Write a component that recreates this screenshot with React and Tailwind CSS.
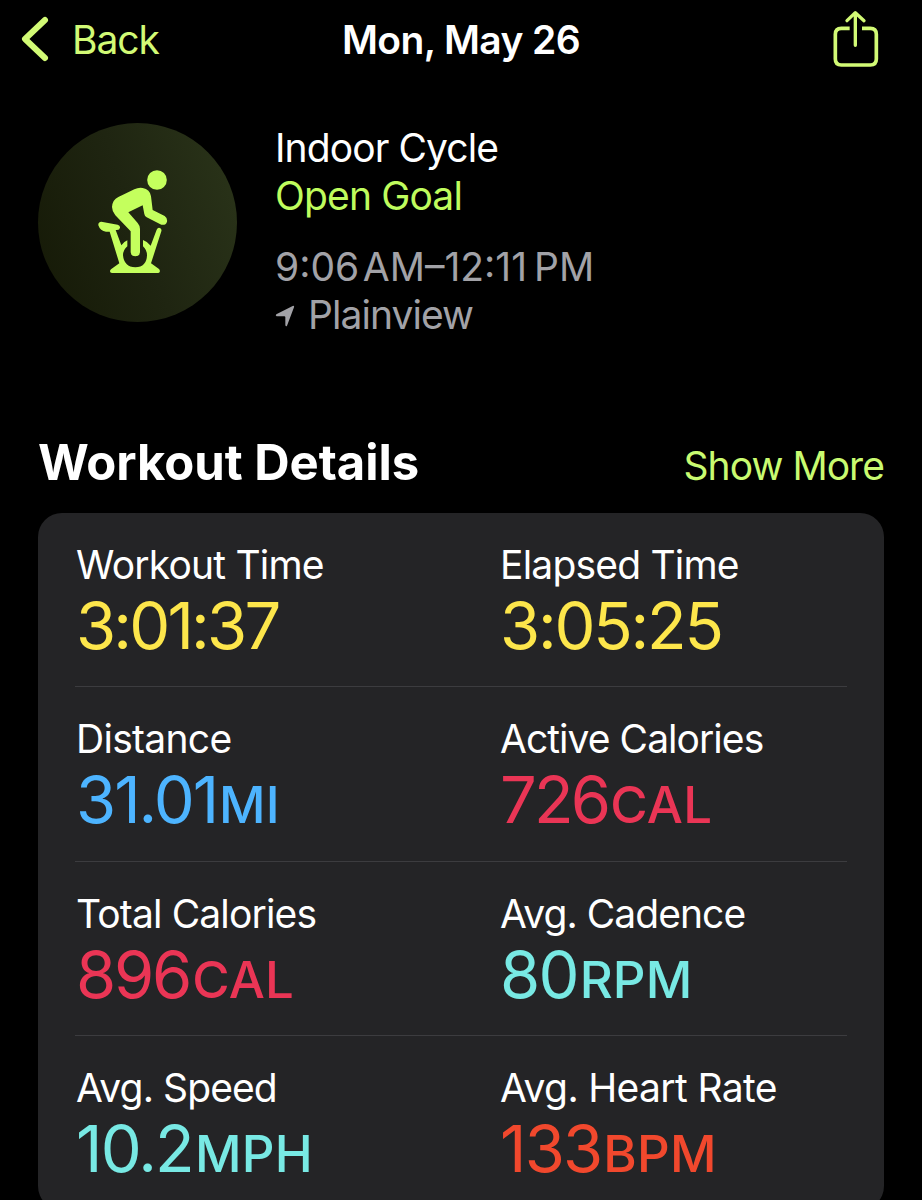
import React from 'react';

const metrics = [
    { label: 'Workout Time', value: '3:01:37', color: 'text-[#fde64b]', labelTracking: 'tracking-[-0.8px]', valueTracking: 'tracking-[-2.8px]' },
    { label: 'Elapsed Time', value: '3:05:25', color: 'text-[#fde64b]', labelTracking: 'tracking-[-0.8px]', valueTracking: 'tracking-[-2.2px]' },
    { label: 'Distance', value: '31.01', unit: 'MI', color: 'text-[#4db4ff]', labelTracking: 'tracking-[-0.7px]', valueTracking: 'tracking-[-2px]' },
    { label: 'Active Calories', value: '726', unit: 'CAL', color: 'text-[#ea3555]', labelTracking: 'tracking-[-0.95px]', valueTracking: 'tracking-[-2.8px]' },
    { label: 'Total Calories', value: '896', unit: 'CAL', color: 'text-[#ea3555]', labelTracking: 'tracking-[-0.85px]', valueTracking: 'tracking-[-2.2px]' },
    { label: 'Avg. Cadence', value: '80', unit: 'RPM', color: 'text-[#78e9e4]', labelTracking: 'tracking-[-0.95px]', valueTracking: 'tracking-[-1.8px]' },
    { label: 'Avg. Speed', value: '10.2', unit: 'MPH', color: 'text-[#78e9e4]', labelTracking: 'tracking-[-0.9px]', valueTracking: 'tracking-[-1.8px]' },
    { label: 'Avg. Heart Rate', value: '133', unit: 'BPM', color: 'text-[#f1482d]', labelTracking: 'tracking-[-0.65px]', valueTracking: 'tracking-[-1.8px]' },
];

const ChevronIcon = () => (
    <svg viewBox="60 45 90 144" className="w-[30px] h-12" fill="none" stroke="currentColor" strokeWidth="18" strokeLinecap="round" strokeLinejoin="round">
        <path d="M135 60 L75 117 L135 174" />
    </svg>
);

const ShareIcon = () => (
    <svg viewBox="156 24 144 180" className="w-12 h-[60px]" fill="none" stroke="currentColor" strokeWidth="11" strokeLinecap="round" strokeLinejoin="round">
        <path d="M226 133 V36 M201 59 L226 35 L252 59" strokeWidth="10" />
        <path strokeLinecap="butt" d="M209 82 H184 Q166 82 166 100 V174 Q166 192 184 192 H271 Q289 192 289 174 V100 Q289 82 271 82 H246" />
    </svg>
);

const IndoorCycleIcon = () => (
    <svg viewBox="24 24 597 597" className="w-full h-full text-[#c4ff5d]" fill="currentColor">
        {/* rider */}
        <circle cx="381" cy="195" r="29.5" />
        <path d="M251 258 Q256 251 265 246 L313 223 Q325 217 338 219 Q360 223 363 244 L368 285 L404 303 Q413 309 411 320 Q407 332 394 329 L350 307 Q344 304 343 297 L338 271 L295 292 L323 324 Q330 332 330 342 V412 Q329 424 316 424 Q303 424 302 412 V349 L256 301 Q239 280 251 258 Z" />
        {/* bike: saddle, posts, flywheel guard and base */}
        <path d="M214 320 L263 329 Q271 331 270 338 Q269 345 261 345 H257 L274 391 Q280 381 292 376 V394 Q279 405 279 421 Q282 456 316 457 Q350 456 351 421 Q351 405 339 394 V375 Q353 380 362 392 L380 344 Q384 336 390 339 Q396 342 394 349 L363 445 L387 462 Q391 466 389 471 Q388 474 384 474 H246 Q240 474 240 469 Q240 465 244 462 L268 445 L239 350 H228 Q211 349 205 331 Q204 321 214 320 Z" />
    </svg>
);

const LocationIcon = () => (
    <svg viewBox="33 555 60 66" className="mt-[4px] w-5 h-[22px]" fill="currentColor">
        <path d="M86 558 Q92 556 90 562 L69 617 Q66 621 64 616 V592 Q64 589 61 589 H38 Q33 587 37 583 Z" />
    </svg>
);

const Metric = ({ item }) => (
    <div className="whitespace-nowrap">
        <p className={`text-[39px] leading-[48px] ${item.labelTracking}`}>{item.label}</p>
        <p className={`mt-[7px] h-[60px] text-[65px] leading-[60px] ${item.color} ${item.valueTracking}`}>
            {item.value}
            {item.unit && <span className="ml-0.5 text-[51px] leading-[1px] font-medium tracking-[0.2px]">{item.unit}</span>}
        </p>
    </div>
);

const App = () => {
    // Two metrics per divider-separated row
    const rows = [];
    for (let i = 0; i < metrics.length; i += 2) {
        rows.push(metrics.slice(i, i + 2));
    }

    return (
        <div className="w-[922px] h-[1200px] overflow-hidden bg-black text-white font-['Inter',sans-serif]">
            <header className="h-[78px] pl-5 pr-[42px] flex items-center text-[39px] leading-[48px] text-[#d2fa75]">
                <button className="flex-1 flex items-center gap-[22px]">
                    <ChevronIcon />
                    <span className="mt-px tracking-[-1.1px]">Back</span>
                </button>
                <h1 className="ml-[22px] mt-px font-semibold text-white tracking-[-0.6px]">Mon, May 26</h1>
                <button className="flex-1 flex justify-end">
                    <ShareIcon />
                </button>
            </header>

            <section className="mt-[45px] pl-[38px] flex gap-[38px]">
                <div className="w-[199px] h-[199px] rounded-full bg-linear-[70deg,#151906,#1f2511_50%,#2b351a]">
                    <IndoorCycleIcon />
                </div>
                <div className="pt-px text-[39px] leading-[47.5px]">
                    <p className="tracking-[-0.9px]">Indoor Cycle</p>
                    <p className="tracking-[-0.85px] text-[#bffc5d]">Open Goal</p>
                    <p className="mt-[24px] tracking-[0px] text-[#a2a2a7]">9:06&#8202;AM–12:11&#8201;PM</p>
                    <div className="flex items-center gap-[13px] text-[#a2a2a7]">
                        <LocationIcon />
                        <span className="tracking-[-0.95px]">Plainview</span>
                    </div>
                </div>
            </section>

            <section className="mt-[95px] px-[38px]">
                <div className="flex items-baseline justify-between">
                    <h2 className="text-[49px] leading-[60px] font-bold tracking-[-0.05px]">Workout Details</h2>
                    <button className="text-[39px] leading-[48px] text-[#c9fb70] tracking-[-0.95px]">Show More</button>
                </div>

                <div className="mt-[20px] px-[37px] rounded-[24px] bg-[#242426]">
                    {rows.map((row, i) => (
                        <div key={i} className="h-[174.33px] pt-[28px] pl-px grid grid-cols-[424px_1fr] border-b border-[#3c3c3f] last:border-transparent">
                            {row.map(item => <Metric key={item.label} item={item} />)}
                        </div>
                    ))}
                </div>
            </section>
        </div>
    );
};

export default App;
